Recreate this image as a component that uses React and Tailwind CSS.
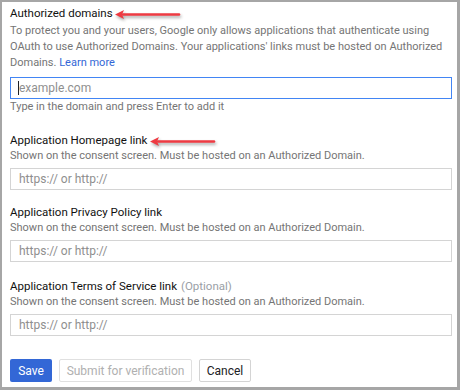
import React from "react";

function Arrow({ className }) {
  return (
    <svg
      className={className}
      width="70"
      height="14"
      viewBox="0 0 70 14"
      style={{ filter: "drop-shadow(1px 2px 1.5px rgba(0,0,0,0.35))" }}
    >
      <path d="M10 6.5 H66" stroke="#ee3a42" strokeWidth="2.6" strokeLinecap="round" />
      <path d="M2 6.5 L11 2 L9 6.5 L11 11 Z" fill="#ee3a42" />
    </svg>
  );
}

function Field({ title, optional, hint, arrow, className }) {
  return (
    <div className={"flex flex-col " + (className || "")}>
      <div className="flex items-center h-[16px] text-[11.5px] text-[#111111]">
        <span>{title}</span>
        {optional && <span className="ml-1 text-[#9aa0a6]">(Optional)</span>}
        {arrow && <Arrow className="ml-[1px] mt-[1px]" />}
      </div>
      <div className="h-[14px] leading-[14px] text-[11px] text-[#757575]">{hint}</div>
      <div className="mt-[5px] h-[22px] border border-[#d4d4d4] flex items-center px-[8px] text-[12px] text-[#8f8f8f]">
        https:// or http://
      </div>
    </div>
  );
}

const HINT = "Shown on the consent screen. Must be hosted on an Authorized Domain.";

export default function App() {
  return (
    <div
      className="w-[460px] h-[390px] overflow-hidden bg-white border-t-2 border-l-2 border-r-[3px] border-b-[3px] border-[#a6a6a6] pl-2 pr-[5px] pt-[4px]"
      style={{ fontFamily: "Roboto, 'Liberation Sans', sans-serif" }}
    >
      <div className="flex items-center h-[16px] text-[11.5px] text-[#111111]">
        <span>Authorized domains</span>
        <Arrow className="mt-[1px]" />
      </div>
      <p className="mt-[1px] text-[11px] leading-[16px] text-[#757575]">
        To protect you and your users, Google only allows applications that authenticate using
        <br />
        OAuth to use Authorized Domains. Your applications' links must be hosted on Authorized
        <br />
        Domains. <span className="text-[#3367d6]">Learn more</span>
      </p>
      <div className="mt-[6px] h-[22px] border border-[#4285f4] flex items-center pl-[7px] text-[12px] text-[#8f8f8f]">
        <span className="w-px h-[14px] bg-[#202124]" />
        <span>example.com</span>
      </div>
      <div className="h-[16px] leading-[16px] text-[11px] text-[#757575]">
        Type in the domain and press Enter to add it
      </div>

      <Field className="mt-[18px]" title="Application Homepage link" hint={HINT} arrow />
      <Field className="mt-[15px]" title="Application Privacy Policy link" hint={HINT} />
      <Field className="mt-[17px]" title="Application Terms of Service link" optional hint={HINT} />

      <div className="mt-[23px] flex gap-[7px] text-[12px]">
        <button className="h-[23px] w-[42px] rounded-[2px] bg-[#3367d6] text-white">
          Save
        </button>
        <button className="h-[23px] w-[133px] rounded-[2px] border border-[#e0e0e0] text-[#b0b0b0]">
          Submit for verification
        </button>
        <button className="h-[23px] w-[52px] rounded-[2px] border border-[#d4d4d4] text-[#202124]">
          Cancel
        </button>
      </div>
    </div>
  );
}
